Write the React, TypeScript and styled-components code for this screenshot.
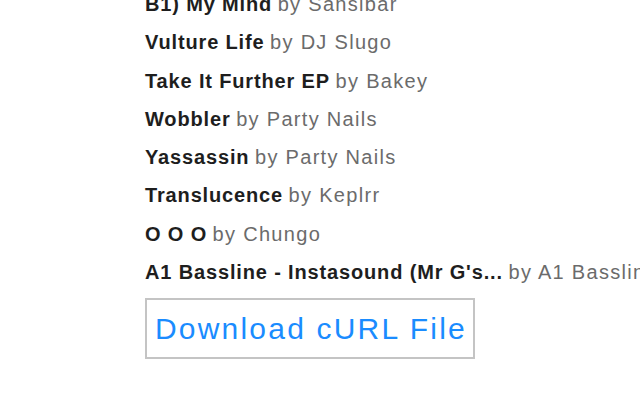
import React from 'react';
import styled, { createGlobalStyle } from 'styled-components';

const GlobalStyle = createGlobalStyle`
    html, body {
        margin: 0;
        padding: 0;
        background: #fff;
        overflow: hidden;
    }
    body {
        font-family: 'Liberation Sans', Arial, sans-serif;
    }
`;

const Page = styled.div`
    width: 640px;
    height: 400px;
    overflow: hidden;
    padding-left: 145px;
    box-sizing: border-box;
`;

const TrackList = styled.ul`
    list-style: none;
    margin: -15px 0 0;
    padding: 0;
`;

const Track = styled.li`
    height: 38.3px;
    line-height: 38.3px;
    font-size: 20px;
    white-space: nowrap;
`;

const Title = styled.span`
    color: #1e1e1e;
    font-weight: 700;
    letter-spacing: 0.85px;
`;

const Artist = styled.span`
    color: #6b6b6b;
    letter-spacing: 1.3px;
`;

const DownloadButton = styled.a`
    display: inline-block;
    margin-top: 7px;
    padding: 0 6px 0 8px;
    height: 57px;
    line-height: 57px;
    border: 2px solid #c4c4c4;
    font-size: 30px;
    letter-spacing: 2.2px;
    color: #1a8cff;
    text-decoration: none;
    white-space: nowrap;
`;

const tracks = [
    { title: 'B1) My Mind', artist: 'Sansibar' },
    { title: 'Vulture Life', artist: 'DJ Slugo' },
    { title: 'Take It Further EP', artist: 'Bakey' },
    { title: 'Wobbler', artist: 'Party Nails' },
    { title: 'Yassassin', artist: 'Party Nails' },
    { title: 'Translucence', artist: 'Keplrr' },
    { title: 'O O O', artist: 'Chungo' },
    { title: "A1 Bassline - Instasound (Mr G's...", artist: 'A1 Bassline' },
];

const App = () => {
    return (
        <>
            <GlobalStyle />
            <Page>
                <TrackList>
                    {tracks.map((t) => (
                        <Track key={t.title}>
                            <Title>{t.title}</Title> <Artist>by {t.artist}</Artist>
                        </Track>
                    ))}
                </TrackList>
                <DownloadButton href="#">Download cURL File</DownloadButton>
            </Page>
        </>
    );
};

export default App;
